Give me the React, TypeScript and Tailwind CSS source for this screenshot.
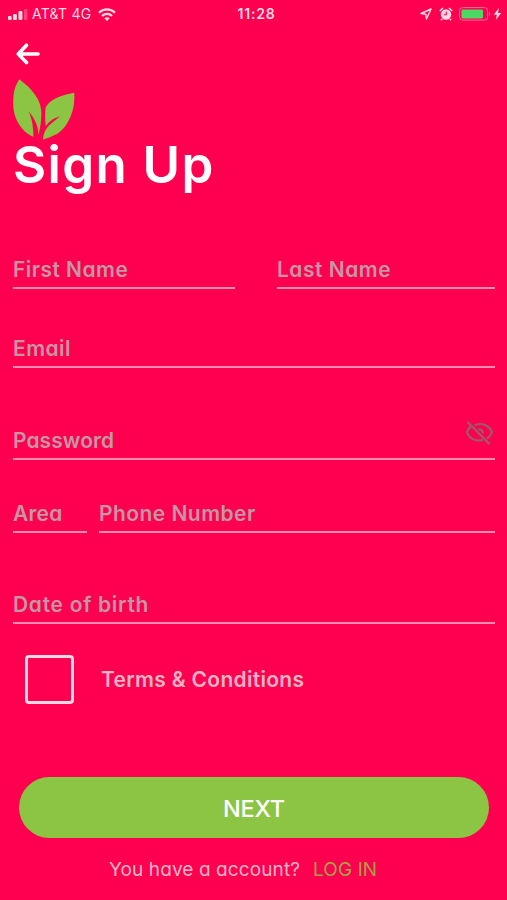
import React from 'react';
import clsx from 'clsx';

interface FieldProps {
  label: string;
  className?: string;
  labelClassName?: string;
  children?: React.ReactNode;
}

const Field: React.FC<FieldProps> = ({ label, className, labelClassName, children }) => (
  <div className={clsx('flex h-10 items-end justify-between border-b-2 border-[#ff8db2]', className)}>
    <span className={clsx('whitespace-nowrap pb-[3px] text-[21px] font-[570] leading-7 text-[#c696a4]', labelClassName)}>
      {label}
    </span>
    {children}
  </div>
);

const StatusBar: React.FC = () => (
  <div className="grid h-7 grid-cols-3 items-center pl-2 pr-[5px] text-[#ffd9e4]">
    <div className="flex items-center">
      <svg width="20" height="11" viewBox="0 0 20 11" fill="currentColor">
        <rect x="0" y="7" width="3.6" height="4" rx="1" />
        <rect x="5" y="5" width="3.8" height="6" rx="1" />
        <rect x="10.5" y="2" width="3.9" height="9" rx="1" />
        <rect x="16" y="0" width="3.4" height="11" rx="1" opacity="0.3" />
      </svg>
      <span className="ml-1 whitespace-nowrap text-[14px] leading-7 tracking-[0.25px]">AT&amp;T 4G</span>
      <svg className="ml-[7px]" width="18" height="13" viewBox="0 0 18 13" fill="none" stroke="currentColor" strokeWidth="2.2">
        <path d="M1 4.8C5.6.2 12.4.2 17 4.8" />
        <path d="M4 8c2.9-2.8 7.1-2.8 10 0" />
        <path d="M6.3 10.2c1.6-1.4 3.8-1.4 5.4 0L9 13z" fill="currentColor" stroke="none" />
      </svg>
    </div>
    <span className="pl-[3px] text-center text-[14px] font-semibold leading-7 tracking-[0.75px]">11:28</span>
    <div className="flex items-center justify-end">
      <svg width="12" height="12" viewBox="0 0 12 12" fill="none" stroke="currentColor" strokeWidth="1.4" strokeLinejoin="round">
        <path d="M11 1 1 5.5l4.8.7.7 4.8z" />
      </svg>
      <svg className="ml-[7px]" width="14" height="14" viewBox="0 0 14 14" fill="currentColor">
        <circle cx="7" cy="7.5" r="5.2" />
        <path d="M.8 4 4 1M13.2 4 10 1M3 12l-1 1.3M11 12l1 1.3" stroke="currentColor" strokeWidth="1.6" />
        <path d="M7.3 4.5v3.3H4.8" fill="none" stroke="#ff0050" strokeWidth="1.1" />
      </svg>
      <svg className="ml-[6px]" width="32" height="14" viewBox="0 0 32 14">
        <rect x=".6" y=".6" width="28" height="12.5" rx="3" fill="none" stroke="#ff6b98" strokeWidth="1" />
        <rect x="2.5" y="2.4" width="21.5" height="9" rx="1.3" fill="#4bd964" />
        <path d="M30 4.7c1.6.7 1.6 3.9 0 4.6z" fill="#ff6b98" />
      </svg>
      <svg className="ml-[2px]" width="9" height="12" viewBox="0 0 9 12" fill="currentColor">
        <path d="M5.8 0 .8 6.7h3L2.9 12l5.3-7H5.1z" />
      </svg>
    </div>
  </div>
);

const LeafLogo: React.FC = () => (
  <svg width="62" height="62" viewBox="0 0 62 62" fill="#8cc444">
    <path d="M6.300.3C10 3.500 14 6 18.300 11c4 4.500 7 9 8.700 14.500 1.600 6 1.600 10 1 16-.500 5-1.200 9-2.500 14.500-.300-5-1-9-3.200-13.500-2-4-4-7-6.600-10.200 2 5 3 8.500 3.800 13 .500 4 .900 8 .900 12.500C16.500 56 13 54 9.500 50 5.500 45 2.500 40 1.200 34-.1 28-.1 22 .600 16c.500-5 2-10 5.700-15.700Z" />
    <path d="M61.300 13.700c.200 7 0 12-1.800 18-1.800 6.500-4.500 12-8.500 17-4.500 5.300-8 6.800-12.500 8.800-3.300 1.300-6 2-8.700 3.300.5-4 1.300-7 3.300-10.500 3.500-5.500 9-8.300 13.700-13-4.500 1.500-7 3-9.500 5-2.200 1.700-3.500 3.500-4.500 5-.7-6-.9-11-.3-18.300 2.500-5 6-7.500 10.800-10 6-3 11.500-3.700 18-5.300Z" />
  </svg>
);

export default function App() {
  return (
    <div className="flex h-[900px] w-full flex-col overflow-hidden bg-[#ff0050] font-['Inter',sans-serif] [font-feature-settings:'cv11']">
      <StatusBar />

      <header className="flex flex-col items-start pl-[13px]">
        <button aria-label="Back" className="ml-[2px] mt-[14px]">
          <svg width="26" height="23" viewBox="0 0 26 23" fill="none" stroke="#fff" strokeWidth="3.6" strokeLinecap="round" strokeLinejoin="round">
            <path d="M11.5 3.2 3.3 12l8.2 8.5M3.5 12H23" />
          </svg>
        </button>
        <div className="mt-[14px]">
          <LeafLogo />
        </div>
        <h1 className="-mt-[6px] whitespace-nowrap text-[51px] font-semibold leading-[60px] tracking-[1.4px] text-white">Sign Up</h1>
      </header>

      <main className="flex flex-col pl-[13px] pr-3 pt-[54px]">
        <div className="flex justify-between">
          <Field label="First Name" className="w-[222px]" labelClassName="tracking-[0.45px]" />
          <Field label="Last Name" className="w-[218px]" labelClassName="tracking-[0.5px]" />
        </div>
        <Field label="Email" className="mt-[39px]" labelClassName="tracking-[0.45px]" />
        <Field label="Password" className="mt-[52px]" labelClassName="tracking-[0.05px]">
          <svg className="mb-[12px] mr-px" width="29" height="26" viewBox="0 0 29 26" fill="none" stroke="#985c6a" strokeWidth="2.2">
            <path d="M9.5 5.5C12 4 16 3.5 20 5c3.5 1.5 6 4 7 7-1 3-2.800 5-5 6.500M18 20c-5 1.200-9.500.2-13-3-1.500-1.500-2.500-3.200-3-5 .7-2.200 2-4 4-5.500" />
            <path d="M2.500 2l22 22M13 9.500c3-.7 5 1 5 4" />
          </svg>
        </Field>
        <div className="mt-[33px] flex gap-3">
          <Field label="Area" className="w-[74px]" labelClassName="tracking-[0.2px]" />
          <Field label="Phone Number" className="flex-1" labelClassName="tracking-[0.45px]" />
        </div>
        <Field label="Date of birth" className="mt-[51px]" labelClassName="pb-[2px] tracking-[0.7px]" />

        <label className="ml-3 mt-[31px] flex items-center">
          <span className="h-[49px] w-[49px] rounded-[4px] border-[3px] border-[#ffd9e4]" />
          <span className="ml-[27px] whitespace-nowrap text-[21px] font-[570] leading-7 tracking-[0.3px] text-[#f2b3c5]">Terms &amp; Conditions</span>
        </label>
      </main>

      <footer className="mt-[73px] flex flex-col px-[19px]">
        <button className="h-[61px] w-[470px] rounded-full bg-[#8cc444] pt-[2px] text-[23.5px] font-medium tracking-[-0.2px] text-white">NEXT</button>
        <p className="ml-[90px] mt-[18px] flex whitespace-nowrap text-[19px] leading-7 tracking-[0.1px] text-[#ffb5ca]">
          <span>You have a account?</span>
          <a className="ml-[13px] text-[#a9a043]">LOG IN</a>
        </p>
      </footer>
    </div>
  );
}
